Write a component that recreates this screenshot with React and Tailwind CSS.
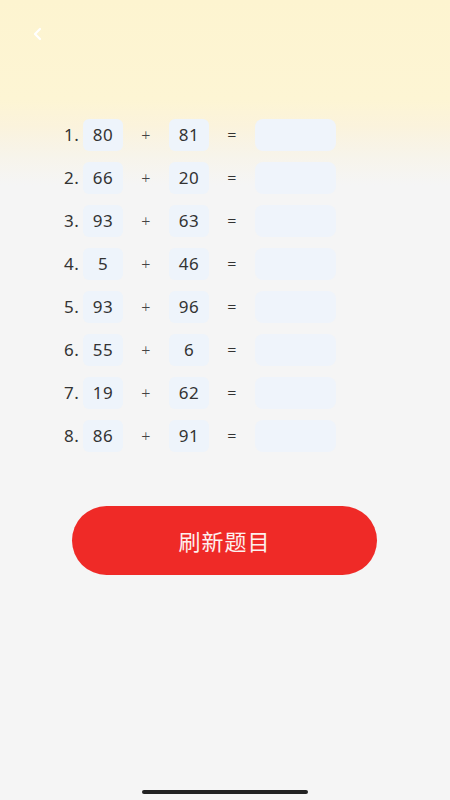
import { useState } from "react";

const initial = [
    [80, 81],
    [66, 20],
    [93, 63],
    [5, 46],
    [93, 96],
    [55, 6],
    [19, 62],
    [86, 91],
];

export default function App() {
    const [problems, setProblems] = useState(initial);

    const refresh = () => {
        setProblems(
            problems.map(() => [
                Math.floor(Math.random() * 100),
                Math.floor(Math.random() * 100),
            ])
        );
    };

    return (
        <div
            className="relative w-[450px] h-[800px] overflow-hidden bg-[linear-gradient(180deg,#fdf4d0_0%,#fdf5d4_100px,#fbf3dc_125px,#f7f4ea_155px,#f5f5f5_185px,#f5f5f5_100%)]"
            style={{ fontFamily: '"Noto Sans", "Noto Sans CJK SC", sans-serif' }}
        >
            {/* Top bar */}
            <div className="h-[68px] flex items-center pl-[32px]">
                <svg width="12" height="14" viewBox="0 0 12 14" fill="none">
                    <path d="M8 2L3 7l5 5" stroke="white" strokeWidth="2.2" strokeLinecap="round" strokeLinejoin="round" />
                </svg>
            </div>

            {/* Problem list */}
            <div className="mt-[51px] flex flex-col gap-[11px]">
                {problems.map(([a, b], i) => (
                    <div key={i} className="flex items-center h-[32px] text-[17px] tracking-[0.5px] text-[#333]">
                        <span className="w-[83px] pl-[64px] text-left">{i + 1}.</span>
                        <span className="w-[40px] h-[32px] rounded-md bg-[#eef4fb] flex items-center justify-center">{a}</span>
                        <span className="w-[46px] text-center text-[16px] font-light text-[#444]">+</span>
                        <span className="w-[40px] h-[32px] rounded-md bg-[#eef4fb] flex items-center justify-center">{b}</span>
                        <span className="w-[46px] text-center text-[16px] font-light">=</span>
                        <span className="w-[81px] h-[32px] rounded-lg bg-[#eff4fb]" />
                    </div>
                ))}
            </div>

            {/* Refresh button */}
            <div className="mt-[54px] flex justify-center">
                <button
                    onClick={refresh}
                    className="w-[305px] h-[69px] ml-[-1px] rounded-full bg-[#ef2a27] text-[#fdf0ee] text-[22px] tracking-[1px]"
                    style={{ fontFamily: '"Noto Sans CJK SC", sans-serif' }}
                >
                    刷新题目
                </button>
            </div>

            {/* Home indicator */}
            <div className="absolute bottom-[6px] left-[142px] w-[166px] h-[4px] rounded-full bg-[#222]" />
        </div>
    );
}
